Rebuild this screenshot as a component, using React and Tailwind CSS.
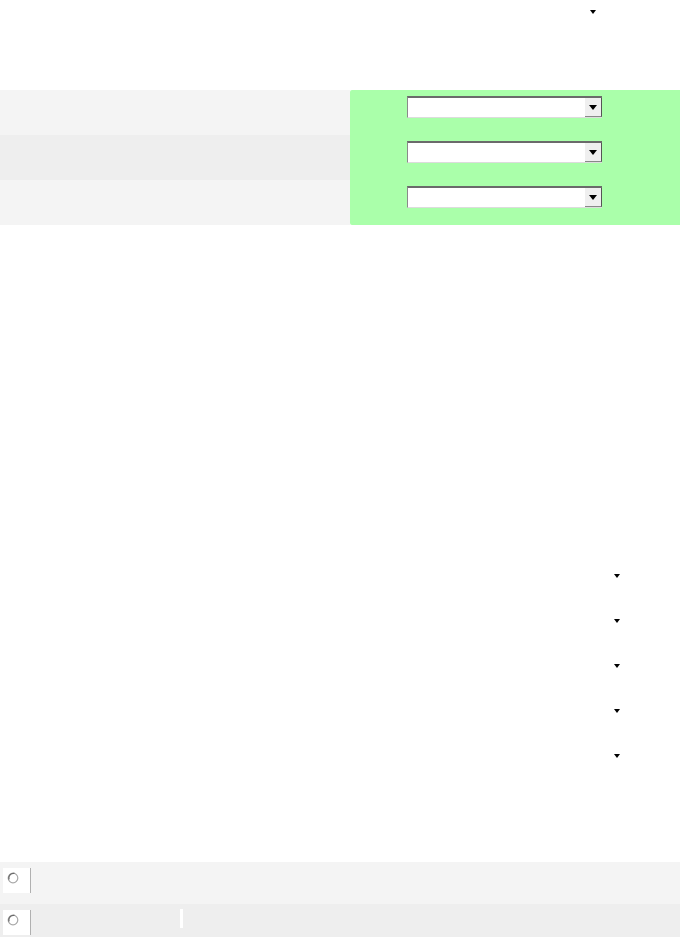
import React from "react";

function Tri({ w = 6, h = 4 }) {
  return (
    <svg width={w} height={h} viewBox="0 0 6 4" preserveAspectRatio="none">
      <path d="M0 0H6L3 4Z" fill="#000" />
    </svg>
  );
}

function Select() {
  return (
    <div className="ml-[57px] mt-[6px] flex h-[22px] w-[195px] bg-white border-t-2 border-l border-t-[#6a6a6a] border-l-[#8a8a8a] border-b border-b-[#dcdcdc]">
      <div className="flex-1" />
      <div className="flex w-[17px] items-center justify-center bg-[#efefef] border-r border-r-[#555] border-b border-b-[#888]">
        <Tri w={8} h={5} />
      </div>
    </div>
  );
}

function Radio({ line }) {
  return (
    <div className="flex h-full items-start">
      <div className="ml-[3px] mt-[6px] flex h-[25px] w-[28px] items-start bg-white border-r border-r-[#b0b0b0]">
        <svg width="12" height="12" viewBox="0 0 12 12" className="ml-[4px] mt-[4px]">
          <circle cx="6" cy="6" r="4.8" fill="#fff" stroke="#a8a8a8" strokeWidth="1.2" />
          <path d="M2 7.5A4.8 4.8 0 0 1 7.5 1.4" fill="none" stroke="#6a6a6a" strokeWidth="1.3" />
        </svg>
      </div>
      {line && <div className="ml-[149px] mt-[5px] h-[19px] w-[3px] bg-white" />}
    </div>
  );
}

export default function App() {
  return (
    <div className="w-[680px] h-[937px] overflow-hidden bg-white font-['Liberation_Sans',sans-serif]">
      <div className="h-[90px] pl-[590px] pt-[10px]">
        <Tri />
      </div>
      <div className="flex h-[135px]">
        <div className="flex w-[350px] flex-col">
          <div className="h-[45px] bg-[#f4f4f4]" />
          <div className="h-[45px] bg-[#eeeeee]" />
          <div className="h-[45px] bg-[#f4f4f4]" />
        </div>
        <div className="flex flex-1 flex-col bg-[#aaffaa] rounded-l-[2px]">
          <div className="h-[45px]"><Select /></div>
          <div className="h-[45px]"><Select /></div>
          <div className="h-[45px]"><Select /></div>
        </div>
      </div>
      <div className="h-[328px]" />
      <div className="flex flex-col">
        {[0, 1, 2, 3, 4].map((i) => (
          <div key={i} className="flex h-[45px] items-center pl-[614px]">
            <Tri />
          </div>
        ))}
      </div>
      <div className="h-[84px]" />
      <div className="h-[42px] bg-[#f4f4f4]">
        <Radio />
      </div>
      <div className="h-[42px] bg-[#eeeeee]">
        <Radio line />
      </div>
    </div>
  );
}
